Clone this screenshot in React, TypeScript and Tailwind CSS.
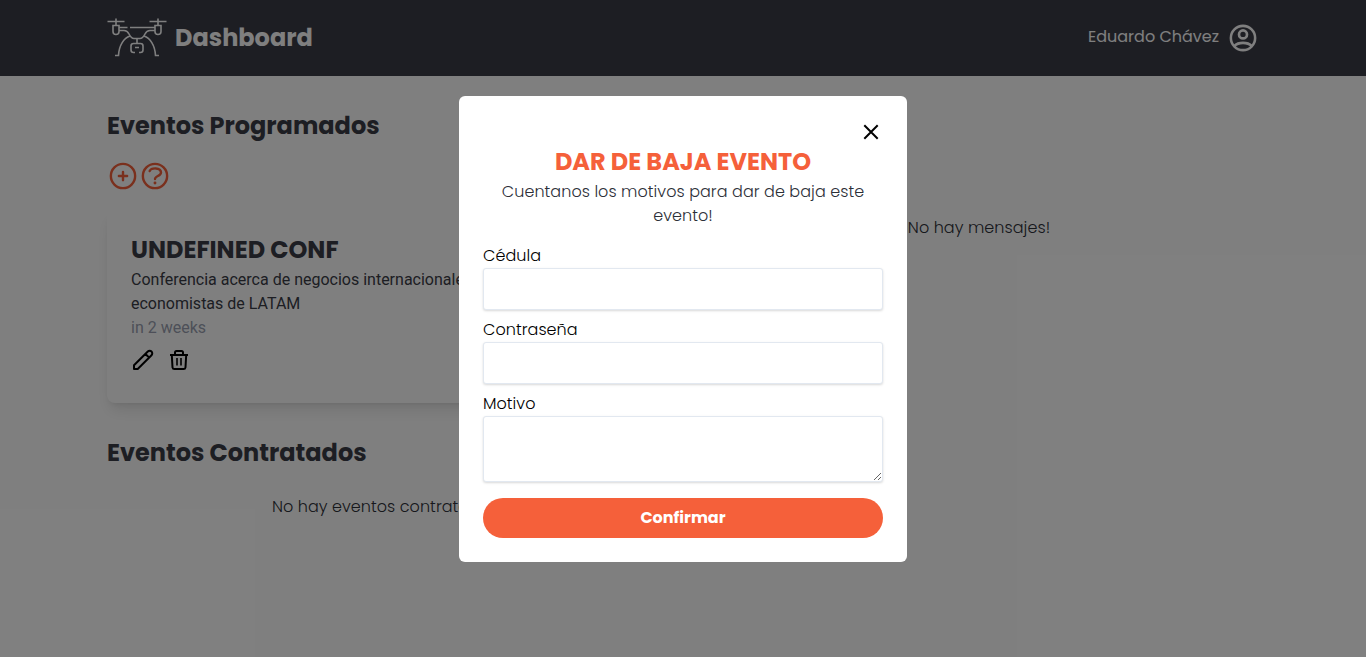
import React from "react";

const ui = "font-['Poppins','Inter','Liberation_Sans',sans-serif]";

function Drone() {
  return (
    <svg width="60" height="42" viewBox="0 0 60 42" fill="none" stroke="#fff" strokeWidth="1.6">
      <path d="M0.5 4.500H17.5M9 1.500V8M42.5 4.500H59.5M51 1.500V8" />
      <path d="M6 8.5H12V14.5A3 3 0 0 1 6 14.5ZM48 8.5H54V14.5A3 3 0 0 1 48 14.5Z" />
      <path d="M12 10.5H20.5M23 10.5H48M12 13.5H17C20 13.5 21 15 22 17C23.5 20 25 21.5 27 21.5H33C35 21.5 36.5 20 38 17C39 15 40 13.5 43 13.5H48" />
      <path d="M23 19C17 21 12 28 11.5 38.5H8M37 19C43 21 48 28 48.5 38.5H52" />
      <path d="M30 22V26.5M28 35.5H26.5A2.5 2.5 0 0 1 24 33V29A2.5 2.5 0 0 1 26.5 26.500H33.5A2.5 2.5 0 0 1 36 29V33A2.5 2.5 0 0 1 33.5 35.5H32M28 30.500H32" />
    </svg>
  );
}

function UserCircle() {
  return (
    <svg width="32" height="32" viewBox="0 0 24 24" fill="none" stroke="#fff" strokeWidth="2">
      <circle cx="12" cy="12" r="9.1" strokeWidth="1.9" />
      <circle cx="12" cy="9.3" r="3" strokeWidth="2" />
      <path d="M5.5 18C7.2 16.300 9.5 15.700 12 15.700S16.8 16.300 18.5 18" strokeWidth="2" />
    </svg>
  );
}

function PlusCircle() {
  return (
    <svg width="32" height="32" viewBox="0 0 24 24" fill="none" stroke="#f5603a" strokeWidth="1.8" strokeLinecap="round">
      <circle cx="12" cy="12" r="9.1" />
      <path d="M12 8.9V15.1M8.9 12H15.1" />
    </svg>
  );
}

function HelpCircle() {
  return (
    <svg width="32" height="32" viewBox="0 0 24 24" fill="none" stroke="#f5603a" strokeWidth="1.8" strokeLinecap="round">
      <circle cx="12" cy="12" r="9.1" />
      <path d="M8 8.300C9.1 5.700 16.300 5.300 16.500 9.300C16.500 12.200 12 11.800 12 14.300" />
      <circle cx="12" cy="17.200" r="1.1" fill="#f5603a" stroke="none" />
    </svg>
  );
}

function Pencil() {
  return (
    <svg width="24" height="24" viewBox="0 0 24 24" fill="none" stroke="#000" strokeWidth="2" strokeLinejoin="round">
      <path d="M3 21V17.300L16.800 3.500A2.150 2.150 0 0 1 20.500 7.200L6.700 21ZM14.500 6L18 9.500" />
    </svg>
  );
}

function Trash() {
  return (
    <svg width="24" height="24" viewBox="0 0 24 24" fill="none" stroke="#000" strokeWidth="2" strokeLinejoin="round">
      <path d="M3 7H21M8 7V4.500A1.500 1.500 0 0 1 9.500 3H14.500A1.500 1.500 0 0 1 16 4.500V7M4.800 7L5.500 19.300A2 2 0 0 0 7.500 21H16.500A2 2 0 0 0 18.500 19.300L19.200 7" />
      <path d="M10 10V17.500M14 10V17.500" strokeWidth="1.600" />
    </svg>
  );
}

function Field({ label, area = false }: { label: string; area?: boolean }) {
  const box = "block w-full rounded-[3px] border border-[#e2e8f0] bg-white px-3 py-2 shadow-[0_1px_3px_rgba(0,0,0,0.1),0_1px_2px_rgba(0,0,0,0.06)] outline-none";
  return (
    <label className="block">
      <span className="block h-6 text-[16px] leading-6 text-black">{label}</span>
      {area ? <textarea className={`${box} h-[66px] resize`} /> : <input className={`${box} h-[42px]`} />}
    </label>
  );
}

export default function App() {
  return (
    <div className={`relative h-[657px] overflow-hidden bg-white font-light tracking-[0.06px] text-[#2d3038] ${ui}`}>
      <header className="h-[76px] bg-[#3a3c47]">
        <div className="mx-auto flex h-full w-[1152px] items-center justify-between tracking-normal text-white">
          <div className="flex items-center gap-2">
            <Drone />
            <span className="text-[24px] font-bold">Dashboard</span>
          </div>
          <div className="flex items-center gap-2">
            <span className="pb-[3px] text-[16px] font-normal">Eduardo Chávez</span>
            <UserCircle />
          </div>
        </div>
      </header>

      <main className="mx-auto grid w-[1152px] grid-cols-2 gap-6 pt-8">
        <section>
          <h2 className="text-[24px] font-bold leading-9 tracking-normal text-[#3a3c47]">Eventos Programados</h2>
          <div className="mt-4 flex">
            <PlusCircle />
            <HelpCircle />
          </div>
          <article className="mt-4 h-[195px] rounded-lg bg-white p-6 tracking-normal shadow-lg">
            <h3 className="text-[24px] font-bold leading-9 text-[#3a3c47]">UNDEFINED CONF</h3>
            <div className="font-['Roboto',sans-serif] text-[16px] font-normal leading-6 text-[#3a3c47]">
              <p>Conferencia acerca de negocios internacionales para<br />economistas de LATAM</p>
              <p className="text-[#9a9fb0]">in 2 weeks</p>
            </div>
            <div className="mt-2 flex gap-3"><Pencil /><Trash /></div>
          </article>
          <h2 className="mt-8 text-[24px] font-bold leading-9 tracking-normal text-[#3a3c47]">Eventos Contratados</h2>
          <p className="mt-6 pr-[3px] text-center text-[16px] leading-6">No hay eventos contratados!</p>
        </section>
        <section className="pt-[108px] text-center">
          <p className="pl-1 text-[16px] leading-6">No hay mensajes!</p>
        </section>
      </main>

      <div className="absolute inset-0 flex items-start justify-center bg-black/50 pt-24">
        <div role="dialog" className="h-[466px] w-[448px] rounded-md bg-white p-6">
          <div className="flex h-6 justify-end">
            <svg width="24" height="24" viewBox="0 0 24 24" stroke="#000" strokeWidth="2" fill="none"><path d="M5.300 5.300L18.700 18.700M18.700 5.300L5.300 18.700" /></svg>
          </div>
          <h2 className="text-center text-[24px] font-bold leading-9 tracking-normal text-[#f5603a]">DAR DE BAJA EVENTO</h2>
          <p className="text-center text-[16px] leading-6">Cuentanos los motivos para dar de baja este<br />evento!</p>
          <form className="mt-4">
            <div className="grid gap-2">
              <Field label="Cédula" />
              <Field label="Contraseña" />
              <Field label="Motivo" area />
            </div>
            <button type="button" className="mt-4 block h-10 w-full rounded-full bg-[#f5603a] text-[16px] font-bold tracking-normal text-white">Confirmar</button>
          </form>
        </div>
      </div>
    </div>
  );
}
